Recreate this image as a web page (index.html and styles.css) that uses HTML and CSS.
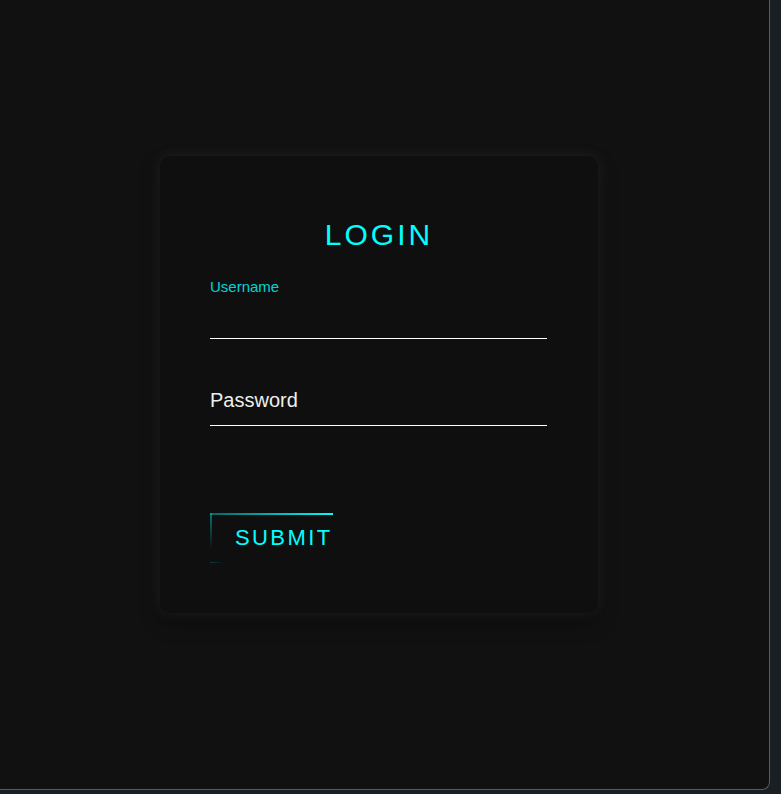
FILE: index.html
```html
<!DOCTYPE html>
<html lang="en">
<head>
<meta charset="utf-8">
<title>Login</title>
<link rel="stylesheet" href="styles.css">
</head>
<body>
<div class="frame">
  <form class="card" onsubmit="return false">
    <h2 class="title">LOGIN</h2>
    <div class="field field-user">
      <input class="input" type="text" id="username">
      <label class="label label-up" for="username">Username</label>
    </div>
    <div class="field field-pass">
      <input class="input" type="password" id="password">
      <label class="label label-in" for="password">Password</label>
    </div>
    <a class="submit" href="#">
      <span class="edge edge-top"></span>
      <span class="edge edge-left"></span>
      <span class="edge edge-bottom"></span>
      SUBMIT
    </a>
  </form>
</div>
</body>
</html>
```

FILE: styles.css
```css
html {
  background: #1a1f26;
}
body {
  margin: 0;
  font-family: "Liberation Sans", Arial, sans-serif;
}
.frame {
  box-sizing: border-box;
  width: 770px;
  height: 790px;
  background: #111111;
  border-right: 1px solid #565b63;
  border-bottom: 1px solid #565b63;
  border-bottom-right-radius: 8px;
  padding: 156px 0 0 160px;
  overflow: hidden;
}
.card {
  box-sizing: border-box;
  width: 438px;
  height: 457px;
  padding: 62px 51px 0 50px;
  background: #0f0f0f;
  border-radius: 10px;
  box-shadow: 0 0 16px rgba(255, 255, 255, 0.08), 0 10px 20px rgba(0, 0, 0, 0.35);
}
.title {
  margin: 0;
  font-size: 30px;
  line-height: 34px;
  font-weight: normal;
  letter-spacing: 3px;
  text-align: center;
  color: #00ffff;
  padding-left: 1px;
}
.field {
  position: relative;
}
.field-user {
  margin-top: 43px;
}
.field-pass {
  margin-top: 42px;
}
.input {
  display: block;
  box-sizing: border-box;
  width: 100%;
  margin: 0;
  padding: 0;
  border: none;
  border-bottom: 1px solid #ffffff;
  background: transparent;
  outline: none;
  color: #fff;
  font-family: inherit;
  font-size: 16px;
}
.field-user .input {
  height: 44px;
}
.field-pass .input {
  height: 45px;
}
.label {
  position: absolute;
  left: 0;
  pointer-events: none;
}
.label-up {
  top: -17px;
  font-size: 15px;
  line-height: 17px;
  color: #00d4da;
}
.label-in {
  top: 8px;
  font-size: 20px;
  line-height: 23px;
  color: #eeeeee;
}
.submit {
  position: relative;
  display: flex;
  align-items: center;
  box-sizing: border-box;
  width: 123px;
  height: 50px;
  margin-top: 87px;
  padding-left: 25px;
  font-size: 22px;
  letter-spacing: 2.4px;
  color: #00ffff;
  text-decoration: none;
  white-space: nowrap;
}
.edge {
  position: absolute;
  display: block;
}
.edge-top {
  top: 0;
  left: 0;
  width: 123px;
  height: 2px;
  background: linear-gradient(90deg, rgba(0, 255, 255, 0.35), #00ffff);
}
.edge-left {
  top: 0;
  left: 0;
  width: 2px;
  height: 36px;
  background: linear-gradient(180deg, rgba(0, 200, 200, 0.55), rgba(0, 200, 200, 0));
}
.edge-bottom {
  bottom: 0;
  left: 0;
  width: 14px;
  height: 1px;
  background: linear-gradient(270deg, rgba(0, 200, 200, 0), rgba(0, 200, 200, 0.25));
}
```
